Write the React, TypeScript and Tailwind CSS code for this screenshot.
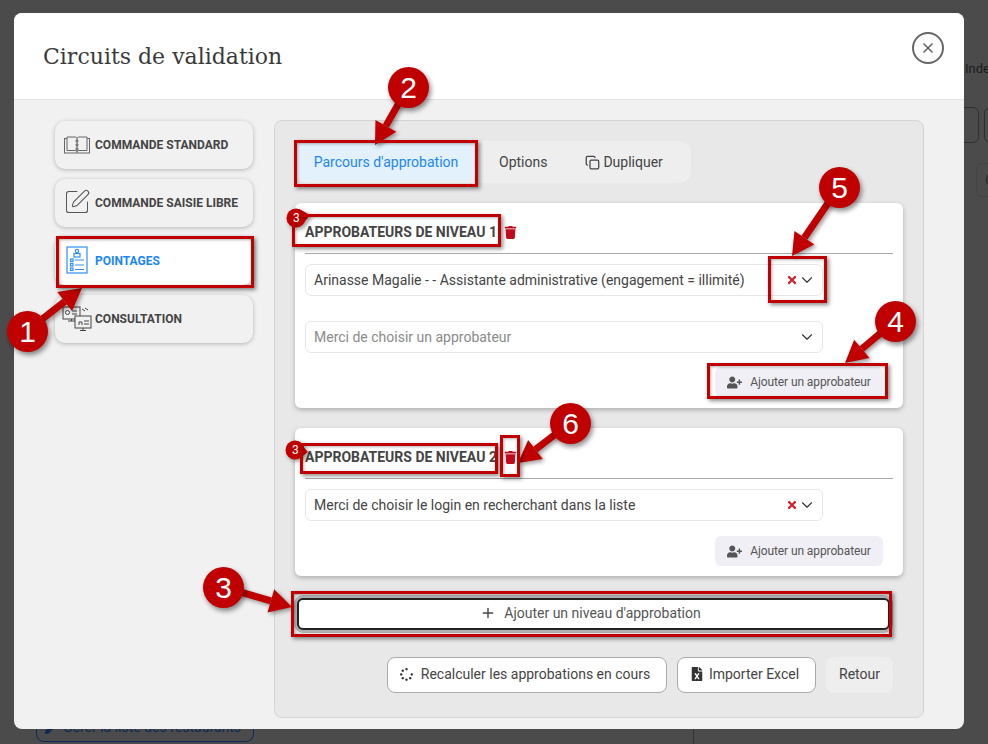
import { ChevronDown, Copy, Plus, SquarePen, X } from 'lucide-react'
import { FaFileExcel, FaPen, FaSpinner, FaTimes, FaTrash, FaUserPlus } from 'react-icons/fa'

const font = { fontFamily: 'Roboto, sans-serif' }

function BookIcon() {
  return (
    <svg width="28" height="18" viewBox="0 0 28 18" fill="none" stroke="#666" strokeWidth="1">
      <rect x="1.5" y="2.500" width="25" height="14.500" />
      <path d="M4 1h8c1 0 2 .5 2 1.500c0-1 1-1.500 2-1.500h8v13.500h-8c-1 0-2 .5-2 1s-1-1-2-1H4zM14 2.500v14.500" fill="#f1f1f1" />
      <circle cx="14" cy="5" r="1.100" />
      <circle cx="14" cy="9" r="1.100" />
      <circle cx="14" cy="13" r="1.100" />
    </svg>
  )
}

function SheetIcon() {
  return (
    <svg width="22" height="28" viewBox="0 0 22 28" fill="none" stroke="#2e90f5" strokeWidth="1.200">
      <rect x="1" y="1" width="20" height="26" />
      <circle cx="11" cy="5" r="1.600" />
      <rect x="8" y="7.500" width="6" height="3.500" />
      <rect x="4.500" y="13" width="2.500" height="2.500" />
      <rect x="4.500" y="17.500" width="2.500" height="2.500" />
      <rect x="4.500" y="22" width="2.500" height="2.500" />
      <path d="M9 14h9M9 19h9M9 23.500h9" />
    </svg>
  )
}

function ScreensIcon() {
  return (
    <svg width="30" height="26" viewBox="0 0 30 26" fill="none" stroke="#444" strokeWidth="1">
      <rect x="1" y="1" width="17" height="12" fill="#f1f1f1" />
      <circle cx="5.500" cy="6.500" r="2" />
      <path d="M10 5h5M10 8h5M6 15h7M9.500 13v2" />
      <path d="M20 3l3 2M23 2l3 2" />
      <rect x="13" y="10" width="16" height="12" fill="#f1f1f1" />
      <path d="M17 19v-3h3v3M22 15h5M22 18h5M18 24.500h6M21 22v2.500" />
    </svg>
  )
}

function SideButton({ icon, label, active }: { icon: React.ReactNode; label: string; active?: boolean }) {
  return (
    <div
      className={`flex h-12 w-[198px] items-center rounded-[10px] shadow-[0_1px_4px_rgba(0,0,0,0.25)] ${
        active ? 'bg-white text-[#1a86f5]' : 'bg-[#f1f1f1] text-[#444]'
      }`}
    >
      <span className="flex w-10 shrink-0 items-center justify-center pl-[4px]">{icon}</span>
      <span className="text-xs font-bold uppercase">{label}</span>
    </div>
  )
}

function SelectBox({ text, muted, clear }: { text: string; muted?: boolean; clear?: boolean }) {
  return (
    <div className="flex h-8 w-[518px] items-center rounded-md border border-[#e6e6e6] bg-white pl-2 pr-[6px]">
      <span className={`flex-1 text-sm ${muted ? 'text-[#8a8a8a]' : 'text-[#444]'}`}>{text}</span>
      {clear && <FaTimes className="text-[12px] text-[#d0202e]" />}
      <ChevronDown size={18} strokeWidth={1.500} className="text-[#333]" />
    </div>
  )
}

function AddApprover() {
  return (
    <div className="flex h-[30px] w-[168px] items-center justify-center gap-2 rounded-md bg-[#f1eff6] text-xs tracking-[-0.1px] text-[#555]">
      <FaUserPlus className="text-[15px] text-[#555]" />
      <span>Ajouter un approbateur</span>
    </div>
  )
}

function LevelCard({ level, children }: { level: number; children: React.ReactNode }) {
  return (
    <div className="rounded-md bg-white px-[10px] pb-[10px] shadow-[0_2px_5px_rgba(0,0,0,0.25)]">
      <div className="flex items-center gap-[7px] border-b border-[#aaa] pb-[11px] pt-[19px]">
        <span className="text-sm font-bold leading-5 text-[#444]">APPROBATEURS DE NIVEAU {level}</span>
        <FaTrash className="text-[13px] text-[#c00a1e]" />
      </div>
      {children}
    </div>
  )
}

function Num({ className, n }: { className: string; n: number }) {
  return (
    <div
      className={`absolute flex h-[41px] w-[41px] items-center justify-center rounded-full bg-[#c00000] text-[30px] text-white shadow-[2px_3px_5px_rgba(0,0,0,0.45)] ${className}`}
      style={{ fontFamily: 'Liberation Sans, sans-serif' }}
    >
      {n}
    </div>
  )
}

function Box({ className }: { className: string }) {
  return (
    <div
      className={`absolute border-[3px] border-[#c00000] shadow-[2px_2px_4px_rgba(0,0,0,0.45),inset_1px_1px_3px_rgba(0,0,0,0.3)] ${className}`}
    />
  )
}

function Arrows() {
  const lines = [
    [27, 331, 82, 288],
    [408, 87, 375, 145],
    [839, 187, 792, 256],
    [895, 321, 845, 363],
    [570, 423, 518, 463],
    [223, 587, 292, 607],
  ]
  return (
    <svg className="absolute left-0 top-0 drop-shadow-[2px_2px_2px_rgba(0,0,0,0.4)]" width="988" height="744">
      {lines.map(([x1, y1, x2, y2], i) => {
        const a = Math.atan2(y2 - y1, x2 - x1)
        const bx = x2 - Math.cos(a) * 22
        const by = y2 - Math.sin(a) * 22
        const nx = -Math.sin(a) * 12
        const ny = Math.cos(a) * 12
        return (
          <g key={i} fill="#c00000">
            <line x1={x1} y1={y1} x2={bx} y2={by} stroke="#c00000" strokeWidth="7" />
            <polygon points={`${x2},${y2} ${bx + nx},${by + ny} ${bx - nx},${by - ny}`} />
          </g>
        )
      })}
      <circle cx="296" cy="218" r="9.500" fill="#c00000" />
      <polygon points="299,209 310,215 302,225" fill="#c00000" />
      <circle cx="295" cy="450" r="9.500" fill="#c00000" />
      <polygon points="298,441 308,452 300,458" fill="#c00000" />
    </svg>
  )
}

export default function App() {
  return (
    <div className="relative h-[744px] w-[988px] overflow-hidden bg-[#4b4b4b] pl-[14px] pt-[13px]" style={font}>
      {/* dimmed page behind the dialog */}
      <span className="absolute left-[965px] top-[59px] text-[13px] text-[#1c1c1c]">Inde</span>
      <div className="absolute left-[940px] top-[107px] h-[36px] w-[39px] rounded-md border border-[#2f2f2f]" />
      <div className="absolute left-[984px] top-[107px] h-[36px] w-[20px] rounded-md border border-[#2f2f2f]" />
      <div className="absolute left-[976px] top-[163px] flex h-[34px] w-[30px] items-center rounded-md border border-[#444] pl-[8px] text-sm text-[#2a2a2a]">
        C
      </div>
      <div className="absolute left-[36px] top-[700px] flex h-[42px] w-[218px] items-end gap-[6px] rounded-lg border border-[#0c2a55] pb-[4px] pl-[8px] text-sm text-[#0c2a55]">
        <FaPen className="mb-[3px] text-[12px]" />
        Gérer la liste des restaurants
      </div>
      <div className="absolute left-[693px] top-[729px] h-[15px] w-px bg-[#333]" />

      <div className="relative h-[716px] w-[950px] overflow-hidden rounded-lg bg-[#f1f1f1]">
        <div className="flex h-[87px] items-center justify-between border-b border-[#e4e4e4] bg-white pl-[29px] pr-[20px]">
          <h1 className="text-[22px] text-[#3a3a3a]" style={{ fontFamily: 'DejaVu Serif, serif' }}>
            Circuits de validation
          </h1>
          <div className="mt-[-16px] flex h-8 w-8 items-center justify-center rounded-full border-2 border-[#666]">
            <X size={16} className="text-[#666]" strokeWidth={2.500} />
          </div>
        </div>

        <div className="flex pl-[41px] pt-[20px]">
          <div className="mt-[1px] flex w-[219px] shrink-0 flex-col gap-[10px]">
            <SideButton icon={<BookIcon />} label="Commande standard" />
            <SideButton
              icon={<SquarePen size={28} strokeWidth={0.900} className="mt-[-3px] text-[#555]" />}
              label="Commande saisie libre"
            />
            <SideButton icon={<div className="mt-[-3px]"><SheetIcon /></div>} label="Pointages" active />
            <SideButton icon={<ScreensIcon />} label="Consultation" />
          </div>

          <div className="h-[598px] w-[650px] rounded-lg border border-[#d4d4d4] bg-[#e8e8e8] px-[20px] pt-[20px]">
            <div className="flex h-[42px] w-[396px] rounded-[12px] bg-[#eeeeee] pl-[2px] text-sm text-[#444]">
              <div className="flex h-10 w-[178px] items-center justify-center rounded-[10px] bg-[#e3f1fd] pt-[2px] text-[#1a86f5]">
                Parcours d'approbation
              </div>
              <div className="flex h-10 items-center pl-[24px] pt-[2px]">Options</div>
              <div className="flex h-10 items-center gap-[3px] pl-[38px] pt-[2px]">
                <Copy size={15} className="text-[#444]" />
                Dupliquer
              </div>
            </div>

            <div className="mt-5 flex flex-col gap-5">
              <LevelCard level={1}>
                <div className="mt-[10px] flex flex-col gap-[25px]">
                  <SelectBox text="Arinasse Magalie - - Assistante administrative (engagement = illimité)" clear />
                  <SelectBox text="Merci de choisir un approbateur" muted />
                </div>
                <div className="mb-[1px] mt-[14px] flex justify-end pr-[10px]">
                  <AddApprover />
                </div>
              </LevelCard>
              <LevelCard level={2}>
                <div className="mt-[10px]">
                  <SelectBox text="Merci de choisir le login en recherchant dans la liste" clear />
                </div>
                <div className="mt-[15px] flex justify-end pr-[10px]">
                  <AddApprover />
                </div>
              </LevelCard>
            </div>

            <div className="ml-[2px] mt-[22px] flex h-8 w-[593px] items-center justify-center gap-2 rounded-md border-2 border-[#222] bg-white pb-[2px] pr-[6px] text-sm text-[#555] shadow-[0_0_0_3px_rgba(120,120,120,0.5)]">
              <Plus size={16} className="text-[#444]" />
              Ajouter un niveau d'approbation
            </div>

            <div className="mr-[10px] mt-[27px] flex justify-end gap-[10px] text-sm text-[#444]">
              <div className="flex h-9 w-[280px] items-center justify-center gap-2 rounded-lg border border-[#aaa] bg-white pb-[2px] pr-[4px]">
                <FaSpinner className="text-[13px] text-[#333]" />
                Recalculer les approbations en cours
              </div>
              <div className="flex h-9 w-[139px] items-center justify-center gap-[5px] rounded-lg border border-[#aaa] bg-white pb-[2px] pr-[4px]">
                <FaFileExcel className="text-[14px] text-[#333]" />
                Importer Excel
              </div>
              <div className="flex h-9 w-[67px] items-center justify-center rounded-lg bg-[#eeeeee] pb-[2px]">Retour</div>
            </div>
          </div>
        </div>
      </div>

      {/* tutorial annotations drawn over the dialog */}
      <Arrows />
      <Box className="left-[56px] top-[236px] h-[52px] w-[198px]" />
      <Box className="left-[294px] top-[140px] h-[47px] w-[184px]" />
      <Box className="left-[292px] top-[214px] h-[33px] w-[209px]" />
      <Box className="left-[768px] top-[256px] h-[47px] w-[59px]" />
      <Box className="left-[707px] top-[363px] h-[36px] w-[181px]" />
      <Box className="left-[300px] top-[443px] h-[31px] w-[198px]" />
      <Box className="left-[500px] top-[435px] h-[42px] w-[20px]" />
      <Box className="left-[291px] top-[591px] h-[46px] w-[601px]" />
      <Num className="left-[7px] top-[311px]" n={1} />
      <Num className="left-[388px] top-[67px]" n={2} />
      <Num className="left-[203px] top-[567px]" n={3} />
      <Num className="left-[875px] top-[301px]" n={4} />
      <Num className="left-[819px] top-[167px]" n={5} />
      <Num className="left-[550px] top-[403px]" n={6} />
      <span className="absolute left-[293px] top-[210px] text-xs text-white">3</span>
      <span className="absolute left-[292px] top-[442px] text-xs text-white">3</span>
    </div>
  )
}
